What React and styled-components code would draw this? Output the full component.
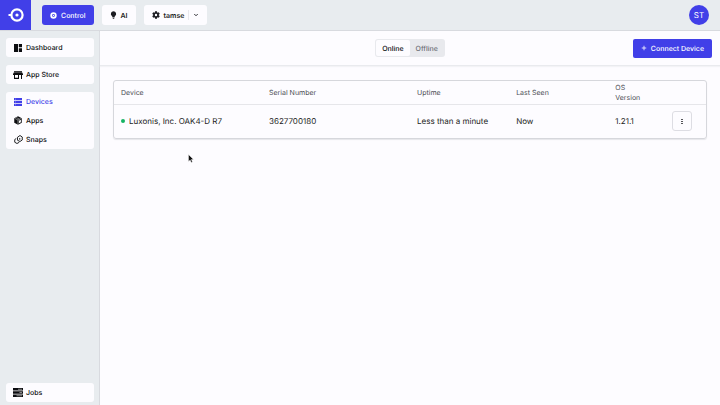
import React, { useState } from "react";
import styled, { createGlobalStyle } from "styled-components";

const NAV_GROUPS = [
  [{ name: "Dashboard", icon: DashboardIcon }],
  [{ name: "App Store", icon: StoreIcon }],
  [
    { name: "Devices", icon: DevicesIcon },
    { name: "Apps", icon: AppsIcon },
    { name: "Snaps", icon: SnapsIcon },
  ],
];

const DEVICES = [
  {
    name: "Luxonis, Inc. OAK4-D R7",
    serial: "3627700180",
    uptime: "Less than a minute",
    lastSeen: "Now",
    version: "1.21.1",
  },
];

function App() {
  const [filter, setFilter] = useState("Online");

  return (
    <Page>
      <GlobalStyle />
      <Header>
        <Logo href="#" aria-label="Home">
          <LogoIcon />
        </Logo>
        <HeaderNav>
          <HeaderButton $primary>
            <ControlIcon />
            Control
          </HeaderButton>
          <HeaderButton>
            <BulbIcon />
            AI
          </HeaderButton>
          <HeaderButton>
            <GearIcon />
            tamse
            <HeaderDivider />
            <ChevronIcon />
          </HeaderButton>
        </HeaderNav>
        <Avatar>ST</Avatar>
      </Header>
      <Body>
        <Sidebar>
          {NAV_GROUPS.map((group) => (
            <NavGroup key={group[0].name}>
              {group.map(({ name, icon: Icon }) => (
                <NavLink key={name} href="#" $active={name === "Devices"}>
                  <Icon />
                  {name}
                </NavLink>
              ))}
            </NavGroup>
          ))}
          <SidebarBottom>
            <NavGroup>
              <NavLink href="#">
                <JobsIcon />
                Jobs
              </NavLink>
            </NavGroup>
          </SidebarBottom>
        </Sidebar>
        <Main>
          <Toolbar>
            <Tabs>
              {["Online", "Offline"].map((name) => (
                <Tab
                  key={name}
                  $active={filter === name}
                  aria-pressed={filter === name}
                  onClick={() => setFilter(name)}
                >
                  {name}
                </Tab>
              ))}
            </Tabs>
            <ConnectButton>
              <PlusIcon />
              Connect Device
            </ConnectButton>
          </Toolbar>
          <Content>
            <TableCard>
              <DeviceTable>
                <thead>
                  <tr>
                    <HeadCell $width="25%">Device</HeadCell>
                    <HeadCell $width="25%">Serial Number</HeadCell>
                    <HeadCell $width="16.75%">Uptime</HeadCell>
                    <HeadCell $width="16.75%">Last Seen</HeadCell>
                    <HeadCell $width="8.25%">OS Version</HeadCell>
                    <HeadCell $width="8.25%" aria-label="Actions" />
                  </tr>
                </thead>
                <tbody>
                  {DEVICES.map((device) => (
                    <tr key={device.serial}>
                      <Cell>
                        <DeviceName>
                          <StatusDot />
                          {device.name}
                        </DeviceName>
                      </Cell>
                      <Cell>{device.serial}</Cell>
                      <Cell>{device.uptime}</Cell>
                      <Cell>{device.lastSeen}</Cell>
                      <Cell>{device.version}</Cell>
                      <ActionCell>
                        <MenuButton aria-label="Device menu">
                          <DotsIcon />
                        </MenuButton>
                      </ActionCell>
                    </tr>
                  ))}
                </tbody>
              </DeviceTable>
            </TableCard>
          </Content>
        </Main>
      </Body>
      <Pointer width="6" height="9" viewBox="0 0 12 18" aria-hidden="true">
        <path
          d="M1 1v14l3.3-3 2.2 5 2.4-1-2.2-5H11z"
          fill="#111"
          stroke="#fff"
          strokeWidth="0.8"
        />
      </Pointer>
    </Page>
  );
}

function LogoIcon() {
  return (
    <svg width="16" height="14" viewBox="0 0 16 14" fill="none">
      <circle cx="9" cy="7" r="5.6" stroke="#fff" strokeWidth="2.2" />
      <path d="M0.5 7h3" stroke="#fff" strokeWidth="2" />
      <circle cx="9" cy="7" r="1.6" fill="#fff" />
    </svg>
  );
}

function ControlIcon() {
  return (
    <svg width="7" height="7" viewBox="0 0 14 14" fill="none">
      <circle cx="7" cy="7" r="4.6" stroke="#fff" strokeWidth="3.6" />
      <circle cx="7" cy="7" r="1.3" fill="#fff" />
    </svg>
  );
}

function BulbIcon() {
  return (
    <svg width="7" height="8" viewBox="0 0 14 16" fill="currentColor">
      <path d="M7 .5a5.3 5.3 0 0 0-3.2 9.5c.7.6 1 1.2 1 2h4.4c0-.8.3-1.4 1-2A5.3 5.3 0 0 0 7 .5z" />
      <path d="M5 12.8h4V14l-1 1.5H6L5 14z" />
    </svg>
  );
}

function GearIcon() {
  return (
    <svg width="8" height="8" viewBox="2 2 20 20" fill="currentColor">
      <path d="M19.14 12.94c.04-.3.06-.61.06-.94s-.02-.64-.07-.94l2.03-1.58a.5.5 0 0 0 .12-.61l-1.92-3.32a.5.5 0 0 0-.59-.22l-2.39.96a7 7 0 0 0-1.62-.94l-.36-2.54a.5.5 0 0 0-.48-.41h-3.84a.5.5 0 0 0-.47.41l-.36 2.54c-.59.24-1.13.57-1.62.94l-2.39-.96a.5.5 0 0 0-.59.22L2.74 8.87a.5.5 0 0 0 .12.61l2.03 1.58a6 6 0 0 0 0 1.88l-2.03 1.58a.5.5 0 0 0-.12.61l1.92 3.32c.12.22.37.29.59.22l2.39-.96c.5.38 1.03.7 1.62.94l.36 2.54c.05.24.24.41.48.41h3.84c.24 0 .44-.17.47-.41l.36-2.54c.59-.24 1.13-.56 1.62-.94l2.39.96c.22.08.47 0 .59-.22l1.92-3.32a.5.5 0 0 0-.12-.61zM12 15a3 3 0 1 1 0-6 3 3 0 0 1 0 6z" />
    </svg>
  );
}

function ChevronIcon() {
  return (
    <svg width="6" height="6" viewBox="0 0 12 12" fill="none">
      <path d="M2.5 4L6 7.5 9.5 4" stroke="currentColor" strokeWidth="1.8" />
    </svg>
  );
}

function DashboardIcon() {
  return (
    <svg width="8" height="8" viewBox="0 0 16 16" fill="currentColor">
      <path d="M0 0h8v16H0zM9.6 0H16v6.6H9.6zM9.6 8.4H16V16H9.6z" />
    </svg>
  );
}

function StoreIcon() {
  return (
    <svg width="10" height="8" viewBox="0 0 20 16" fill="currentColor">
      <path d="M2 0h16v1.6H2z" />
      <path
        d="M2 2.4h16L20 6v2h-2v8h-2V8h-4v8H2V8H0V6zM4 8v5.5h6V8z"
        fillRule="evenodd"
      />
    </svg>
  );
}

function DevicesIcon() {
  return (
    <svg width="8" height="8" viewBox="0 0 16 16">
      <path
        d="M0 0h16v4.6H0zM0 5.8h16v4.4H0zM0 11.4h16V16H0z"
        fill="currentColor"
      />
      <path d="M2 2.2h2M2 8h2M2 13.7h2" stroke="#fff" strokeWidth="0.8" />
    </svg>
  );
}

function AppsIcon() {
  return (
    <svg width="8" height="9" viewBox="0 0 16 18">
      <path d="M8 .5l7.5 3.8v9L8 17.5.5 13.3v-9z" fill="currentColor" />
      <path
        d="M1.5 4.8L8 8l6.5-3.2M8 8v9M4.5 3l6.7 3.4"
        stroke="#fff"
        strokeWidth="0.9"
        fill="none"
      />
      <path d="M9.8 9.5l4-2v4.8l-4 2.3z" fill="#fff" />
    </svg>
  );
}

function SnapsIcon() {
  return (
    <svg
      width="9"
      height="9"
      viewBox="0 0 18 18"
      fill="none"
      stroke="currentColor"
      strokeWidth="1.8"
    >
      <path d="M7 4.5L12 1l4.5 3v6L12 13l-5-2.5z" />
      <path d="M11.5 6v3.5" />
      <path d="M4.500 7L1.500 9v5.500L6 17l4.500-2.500" />
    </svg>
  );
}

function JobsIcon() {
  return (
    <svg width="10" height="9" viewBox="0 0 20 18">
      <path d="M0 0h20v5H0zM0 6.5h20v5H0zM0 13h20v5H0z" fill="currentColor" />
      <path
        d="M10 2.5h8M13 9h5M7 15.5h11"
        stroke="#aaa"
        strokeWidth="1.6"
      />
    </svg>
  );
}

function PlusIcon() {
  return (
    <svg width="6" height="6" viewBox="0 0 12 12">
      <path d="M6 1.500v9M1.500 6h9" stroke="currentColor" strokeWidth="1.600" />
    </svg>
  );
}

function DotsIcon() {
  return (
    <svg width="2" height="5" viewBox="0 0 2 5" fill="currentColor">
      <path d="M0 0h2v1H0zM0 2h2v1H0zM0 4h2v1H0z" opacity="0.75" />
    </svg>
  );
}

const GlobalStyle = createGlobalStyle`
  * {
    box-sizing: border-box;
  }

  body {
    margin: 0;
    font-family: Inter, "Liberation Sans", sans-serif;
    font-size: 7px;
    color: #1c1d22;
    background: #fdfcff;
    text-rendering: geometricPrecision;
  }

  button {
    font: inherit;
    text-rendering: inherit;
    border: 0;
    padding: 0;
    cursor: pointer;
  }

  a {
    text-decoration: none;
  }

  svg {
    display: block;
    flex-shrink: 0;
  }
`;

const Page = styled.div`
  display: flex;
  flex-direction: column;
  min-height: 100vh;
`;

const Header = styled.header`
  display: flex;
  align-items: stretch;
  height: 31px;
  padding-right: 11px;
  background: #e8ecef;
  border-bottom: 1px solid #d8dadf;
`;

const Logo = styled.a`
  display: flex;
  align-items: center;
  justify-content: center;
  width: 31px;
  background: #413fe8;
`;

const HeaderNav = styled.nav`
  display: flex;
  flex: 1;
  align-items: center;
  gap: 8px;
  padding-left: 11px;
`;

const HeaderButton = styled.button`
  display: flex;
  align-items: center;
  gap: 4px;
  height: 20px;
  padding: 0 8px;
  border-radius: 3px;
  font-weight: ${(props) => (props.$primary ? 500 : 600)};
  color: ${(props) => (props.$primary ? "#fff" : "#1c1d22")};
  background: ${(props) => (props.$primary ? "#413fe8" : "#fdfcff")};
`;

const HeaderDivider = styled.span`
  width: 1px;
  height: 10px;
  background: #e8e8ed;
`;

const Avatar = styled.div`
  display: flex;
  align-items: center;
  justify-content: center;
  align-self: center;
  width: 20px;
  height: 20px;
  border-radius: 50%;
  font-size: 8px;
  color: #fff;
  background: #413fe8;
`;

const Body = styled.div`
  display: flex;
  flex: 1;
`;

const Sidebar = styled.aside`
  display: flex;
  flex-direction: column;
  gap: 8px;
  width: 100px;
  padding: 7px 5px 3px 6px;
  background: #e8ecef;
  border-right: 1px solid #d8dadf;
`;

const NavGroup = styled.nav`
  border-radius: 3px;
  background: #fdfcff;
`;

const NavLink = styled.a`
  display: grid;
  grid-template-columns: 10px 1fr;
  align-items: center;
  gap: 3px;
  height: 19px;
  padding-left: 7px;
  font-weight: 500;
  color: ${(props) => (props.$active ? "#413fe8" : "#0c0d10")};

  svg {
    justify-self: center;
  }
`;

const SidebarBottom = styled.div`
  margin-top: auto;
`;

const Main = styled.main`
  flex: 1;
  min-width: 0;
`;

const Toolbar = styled.div`
  display: grid;
  grid-template-columns: 1fr auto 1fr;
  align-items: center;
  height: 35px;
  padding: 0 8px;
  border-bottom: 1px solid #e9eaee;
  box-shadow: 0 1px 1px #f3f3f6;
`;

const Tabs = styled.div`
  display: flex;
  grid-column: 2;
  padding: 1px;
  border-radius: 3px;
  background: #e8e9ed;
`;

const Tab = styled.button`
  height: 16px;
  padding: 0 6px;
  border-radius: 2px;
  font-weight: 500;
  color: ${(props) => (props.$active ? "#0c0d10" : "#6e7077")};
  background: ${(props) => (props.$active ? "#fdfcff" : "transparent")};
`;

const ConnectButton = styled.button`
  display: flex;
  align-items: center;
  justify-self: end;
  gap: 4px;
  height: 19px;
  padding: 0 8px;
  border-radius: 2px;
  font-weight: 500;
  color: #fff;
  background: #413fe8;
`;

const Content = styled.div`
  padding: 14px 13px;
`;

const TableCard = styled.div`
  border: 1px solid #d6d7dc;
  border-radius: 3px;
  box-shadow: 0 1px 1px #e6e6ea;
`;

const DeviceTable = styled.table`
  width: 100%;
  table-layout: fixed;
  border-collapse: collapse;
`;

const HeadCell = styled.th`
  width: ${(props) => props.$width};
  height: 23px;
  padding: 2px 7px 0;
  border-bottom: 1px solid #e6e6ea;
  font-weight: 400;
  line-height: 10px;
  text-align: left;
  color: #4c4e55;
`;

const Cell = styled.td`
  height: 34px;
  padding: 0 7px;
  font-size: 8px;
  white-space: nowrap;
`;

const ActionCell = styled(Cell)`
  padding: 0 15px;
`;

const DeviceName = styled.div`
  display: flex;
  align-items: center;
  gap: 4px;
`;

const StatusDot = styled.span`
  width: 4px;
  height: 4px;
  border-radius: 50%;
  background: #16b364;
`;

const MenuButton = styled.button`
  display: flex;
  align-items: center;
  justify-content: center;
  width: 20px;
  height: 20px;
  border: 1px solid #dddde3;
  border-radius: 3px;
  color: #1c1d22;
  background: #fdfcff;
`;

const Pointer = styled.svg`
  position: absolute;
  top: 154px;
  left: 188px;
  pointer-events: none;
`;

export default App;
